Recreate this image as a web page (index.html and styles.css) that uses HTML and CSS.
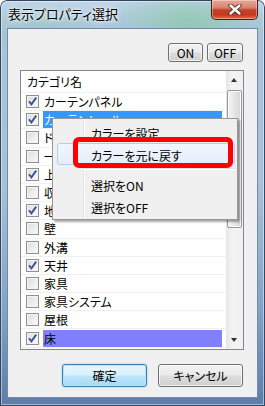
FILE: index.html
```html
<!DOCTYPE html>
<html lang="ja">

<head>
    <meta charset="UTF-8">
    <title>表示プロパティ選択</title>
    <link rel="stylesheet" href="styles.css">
</head>

<body>
    <div class="window">
        <div class="titlebar">
            <span class="title">表示プロパティ選択</span>
            <div class="close">
                <svg width="14" height="11" viewBox="0 0 14 11">
                    <path d="M2.5 1.5 L11.5 9.5 M11.5 1.5 L2.5 9.5" stroke="#4a2a25" stroke-width="4.2" stroke-linecap="round" />
                    <path d="M2.5 1.5 L11.5 9.5 M11.5 1.5 L2.5 9.5" stroke="#fff" stroke-width="2.4" stroke-linecap="round" />
                </svg>
            </div>
        </div>

        <div class="client">
            <div class="toolbar">
                <div class="btn on_btn">ON</div>
                <div class="btn off_btn">OFF</div>
            </div>

            <div class="list">
                <div class="rows">
                    <div class="header">カテゴリ名</div>
                    <div class="row"><span class="check on"></span><span class="label">カーテンパネル</span></div>
                    <div class="row"><span class="check on"></span><span class="label selected">カーテンレール</span></div>
                    <div class="row"><span class="check"></span><span class="label">ドア</span></div>
                    <div class="row"><span class="check"></span><span class="label">一般</span></div>
                    <div class="row"><span class="check on"></span><span class="label">上部</span></div>
                    <div class="row"><span class="check"></span><span class="label">収納</span></div>
                    <div class="row"><span class="check on"></span><span class="label">地形</span></div>
                    <div class="row"><span class="check"></span><span class="label">壁</span></div>
                    <div class="row"><span class="check"></span><span class="label">外溝</span></div>
                    <div class="row"><span class="check on"></span><span class="label">天井</span></div>
                    <div class="row"><span class="check"></span><span class="label">家具</span></div>
                    <div class="row"><span class="check"></span><span class="label">家具システム</span></div>
                    <div class="row"><span class="check"></span><span class="label">屋根</span></div>
                    <div class="row"><span class="check on"></span><span class="label colored">床</span></div>
                </div>
                <div class="scrollbar">
                    <div class="arrow up"></div>
                    <div class="track">
                        <div class="thumb"></div>
                    </div>
                    <div class="arrow down"></div>
                </div>
            </div>

            <div class="footer">
                <div class="btn wide default">確定</div>
                <div class="btn wide">キャンセル</div>
            </div>
        </div>

        <!-- context menu over the list -->
        <div class="menu">
            <div class="item">カラーを設定</div>
            <div class="item hover">カラーを元に戻す</div>
            <div class="separator"></div>
            <div class="item">選択をON</div>
            <div class="item">選択をOFF</div>
        </div>
        <div class="mark"></div>
    </div>

    <script>
        const check_mark = '<svg width="11" height="11" viewBox="0 0 11 11"><path d="M2 5.2 L4.4 8.4 L9.2 1.6" fill="none" stroke="#3d5592" stroke-width="1.9" /></svg>';
        const checked = document.querySelectorAll(".check.on");
        for (let index = 0; index < checked.length; index++) {
            checked[index].innerHTML = check_mark;
        }
    </script>
</body>

</html>
```

FILE: styles.css
```css
* {
    margin: 0;
    padding: 0;
    box-sizing: border-box;
}

body {
    overflow: hidden;
    font-family: "Noto Sans CJK JP", "Noto Sans", sans-serif;
    font-feature-settings: "palt";
    font-size: 12px;
    line-height: 1;
    color: #000;
}

.window {
    position: relative;
    width: 265px;
    height: 406px;
    display: flex;
    flex-direction: column;
    border-radius: 7px 7px 0 0;
    background:
        radial-gradient(ellipse 90px 40px at 190px 22px, rgba(140, 200, 170, .8), transparent),
        radial-gradient(ellipse 60px 30px at 40px 30px, rgba(150, 200, 180, .6), transparent),
        linear-gradient(180deg, #c2d6ea 0%, #a9c3dc 8%, #a6c2d6 45%, #84a4c8 75%, #5d7cab 100%);
    box-shadow: inset 0 0 0 1px #33465f, inset 0 0 0 2px rgba(255, 255, 255, .45);
}

.titlebar {
    height: 28px;
    display: flex;
    justify-content: space-between;
    align-items: flex-start;
    padding: 0 7px 0 8px;
}

.title {
    font-size: 13px;
    margin-top: 7px;
    text-shadow: 0 0 6px #fff, 0 0 3px #fff;
}

.close {
    width: 47px;
    height: 20px;
    display: flex;
    justify-content: center;
    align-items: center;
    border: 1px solid #4f1a14;
    border-top: none;
    border-radius: 0 0 5px 5px;
    background: linear-gradient(180deg, #e9a999 0%, #d8816e 42%, #c3422a 52%, #c8361f 78%, #e36d4e 100%);
    box-shadow: inset 0 0 0 1px rgba(255, 255, 255, .35);
}

.client {
    flex: 1;
    margin: 0 7px 8px 7px;
    border: 1px solid #7489a4;
    background: #f0f0f0;
    display: flex;
    flex-direction: column;
    padding: 14px 13px 10px 12px;
}

.toolbar,
.footer {
    display: flex;
    justify-content: flex-end;
    padding-right: 1px;
}

.toolbar {
    gap: 4px;
}

.btn {
    height: 19px;
    display: flex;
    justify-content: center;
    align-items: center;
    border: 1px solid #707070;
    border-radius: 3px;
    background: linear-gradient(180deg, #f2f2f2 0%, #ebebeb 48%, #dddddd 52%, #cfcfcf 100%);
    box-shadow: inset 0 0 0 1px rgba(255, 255, 255, .7);
    font-size: 12px;
}

.on_btn {
    width: 35px;
}

.off_btn {
    width: 36px;
}

.list {
    height: 280px;
    margin-top: 8px;
    border: 1px solid #828790;
    background: #fff;
    display: flex;
}

.rows {
    flex: 1;
}

.header {
    height: 22px;
    padding: 5px 0 0 6px;
    border-bottom: 1px solid #f0f0f0;
}

.row {
    height: 18.2px;
    display: flex;
    align-items: center;
    border-bottom: 1px solid #f0f0f0;
}

.check {
    width: 13px;
    height: 13px;
    margin-left: 5px;
    border: 1px solid #8f8f8f;
    background: linear-gradient(135deg, #dcdcdc, #fbfbfb);
    box-shadow: inset 0 0 0 1px #f4f4f4;
    display: flex;
    justify-content: center;
    align-items: center;
}

.label {
    flex: 1;
    height: 17px;
    margin: 0 4px 0 4px;
    padding: 3px 0 0 1px;
}

.selected {
    background: #3399ff;
    color: #fff;
}

.colored {
    background: #8080ff;
}

.scrollbar {
    width: 17px;
    display: flex;
    flex-direction: column;
    background: linear-gradient(90deg, #e6e6e6, #f4f4f4 40%, #f0f0f0);
}

.arrow {
    height: 17px;
    position: relative;
}

.arrow::after {
    content: "";
    position: absolute;
    left: 5px;
    width: 0;
    height: 0;
    border-left: 3.5px solid transparent;
    border-right: 3.5px solid transparent;
}

.up::after {
    top: 7px;
    border-bottom: 4px solid #333;
}

.down::after {
    top: 6px;
    border-top: 4px solid #333;
}

.track {
    flex: 1;
    padding: 2px 1px 0 1px;
}

.thumb {
    height: 138px;
    border: 1px solid #979797;
    border-radius: 2px;
    background: linear-gradient(90deg, #f5f5f5, #e6e6e6 50%, #d6d6d6);
    box-shadow: inset 0 0 0 1px #fafafa;
}

.footer {
    margin-top: 14px;
    gap: 11px;
}

.wide {
    width: 85px;
    height: 23px;
}

.default {
    border-color: #3c7fb1;
    background: linear-gradient(180deg, #eaf6fd 0%, #d9f0fc 48%, #bee6fd 52%, #a7d9f5 100%);
    box-shadow: inset 0 0 0 1px #b3e3ff, 0 0 2px #7ec5ee;
}

/* context menu */
.menu {
    position: absolute;
    left: 52px;
    top: 118px;
    width: 186px;
    padding: 2px;
    border: 1px solid #979797;
    background: linear-gradient(90deg, #f0f0f0 30px, #e2e3e3 30px, #e2e3e3 31px, #fff 31px, #fff 32px, #f0f0f0 32px);
    box-shadow: 2px 2px 2px rgba(0, 0, 0, .35);
}

.item {
    height: 22px;
    padding: 6px 0 0 33px;
    margin-left: 2px;
    border: 1px solid transparent;
    border-radius: 3px;
}

.hover {
    border-color: #aecff7;
    background: linear-gradient(180deg, #f2f7fe, #e3edfb);
}

.separator {
    height: 8px;
    margin-left: 28px;
    background: linear-gradient(180deg, transparent 3px, #e0e0e0 3px, #e0e0e0 4px, #fff 4px, #fff 5px, transparent 5px);
}

.mark {
    position: absolute;
    left: 73px;
    top: 137px;
    width: 160px;
    height: 31px;
    border: 5px solid #ff0000;
    border-radius: 6px;
}
```
